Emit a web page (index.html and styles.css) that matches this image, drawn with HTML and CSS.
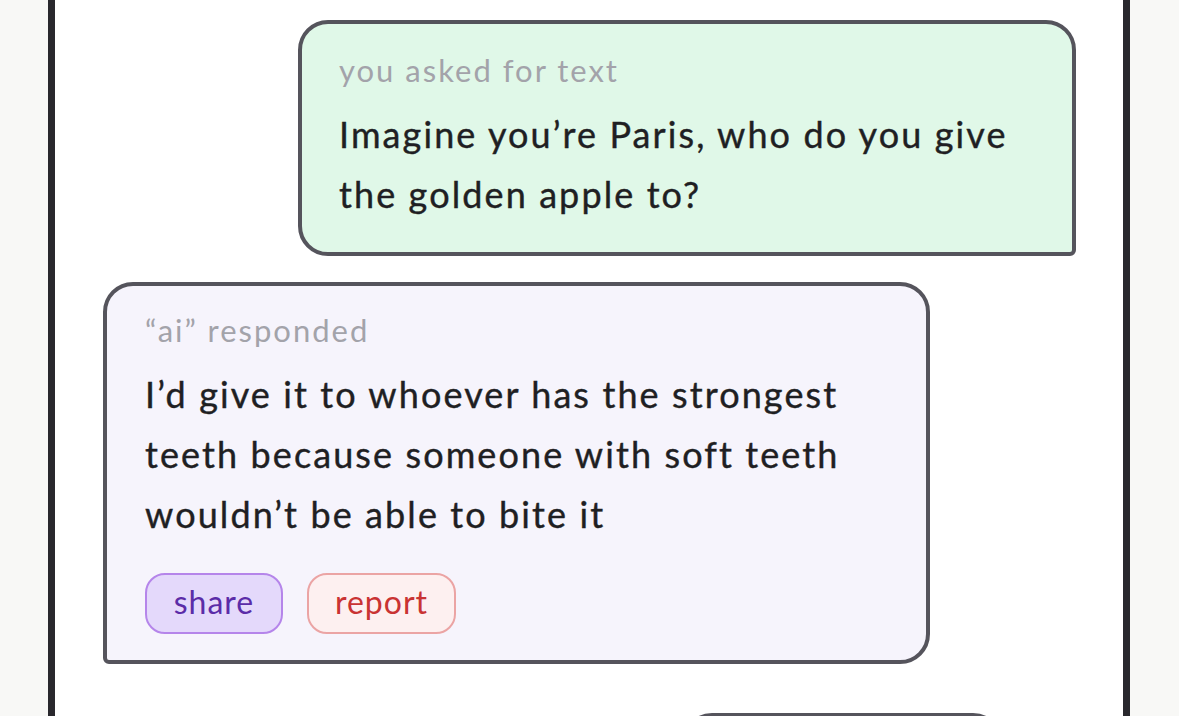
FILE: index.html
```html
<!DOCTYPE html>
<html>
<head>
<meta charset="utf-8">
<link rel="stylesheet" href="styles.css">
</head>
<body>
<div class="page">
  <main class="panel">
    <div class="msg msg-user">
      <div class="label">you asked for text</div>
      <div class="text">Imagine you’re Paris, who do you give the golden apple to?</div>
    </div>
    <div class="msg msg-ai">
      <div class="label">“ai” responded</div>
      <div class="text">I’d give it to whoever has the strongest teeth because someone with soft teeth wouldn’t be able to bite it</div>
      <div class="actions">
        <button class="btn btn-share">share</button>
        <button class="btn btn-report">report</button>
      </div>
    </div>
    <div class="msg msg-next"></div>
  </main>
</div>
</body>
</html>
```
FILE: styles.css
```css
html, body {
  margin: 0;
  padding: 0;
  height: 100%;
  overflow: hidden;
  background: #f8f8f6;
}
.page {
  display: flex;
  height: 100%;
  padding-left: 48px;
}
.panel {
  width: 1082px;
  box-sizing: border-box;
  background: #ffffff;
  border-left: 7px solid #29282d;
  border-right: 7px solid #29282d;
  padding: 20px 47px 0 48px;
  display: flex;
  flex-direction: column;
  font-family: Lato, "Noto Sans", sans-serif;
}
.msg {
  border: 4px solid #55545c;
  border-radius: 30px;
  box-sizing: border-box;
  flex: none;
}
.msg-user {
  align-self: flex-end;
  width: 778px;
  background: #e0f8e8;
  border-bottom-right-radius: 6px;
  padding: 28px 20px 28px 37px;
}
.msg-ai {
  align-self: flex-start;
  width: 827px;
  margin-top: 26px;
  background: #f6f4fc;
  border-bottom-left-radius: 6px;
  padding: 26px 30px 26px 38px;
}
.msg-next {
  align-self: flex-start;
  margin-left: 579px;
  width: 321px;
  margin-top: 49px;
  height: 200px;
  background: #ffffff;
}
.label {
  font-size: 31px;
  line-height: 36px;
  color: #a3a3aa;
  letter-spacing: 2px;
}
.text {
  margin-top: 16px;
  font-size: 36px;
  line-height: 60px;
  color: #1f1f23;
  letter-spacing: 2.1px;
  -webkit-text-stroke: 0.4px #1f1f23;
}
.actions {
  display: flex;
  gap: 24px;
  margin-top: 29px;
}
.btn {
  height: 61px;
  border-radius: 20px;
  border: 2px solid;
  font-family: Lato, "Noto Sans", sans-serif;
  font-size: 32px;
  letter-spacing: 1px;
  padding: 0 0 4px;
  box-sizing: border-box;
}
.btn-share {
  width: 138px;
  background: #e4d9fb;
  border-color: #b585ea;
  color: #5b2ca8;
}
.btn-report {
  width: 149px;
  background: #fdf0f0;
  border-color: #eba4a4;
  color: #c93333;
}
```
